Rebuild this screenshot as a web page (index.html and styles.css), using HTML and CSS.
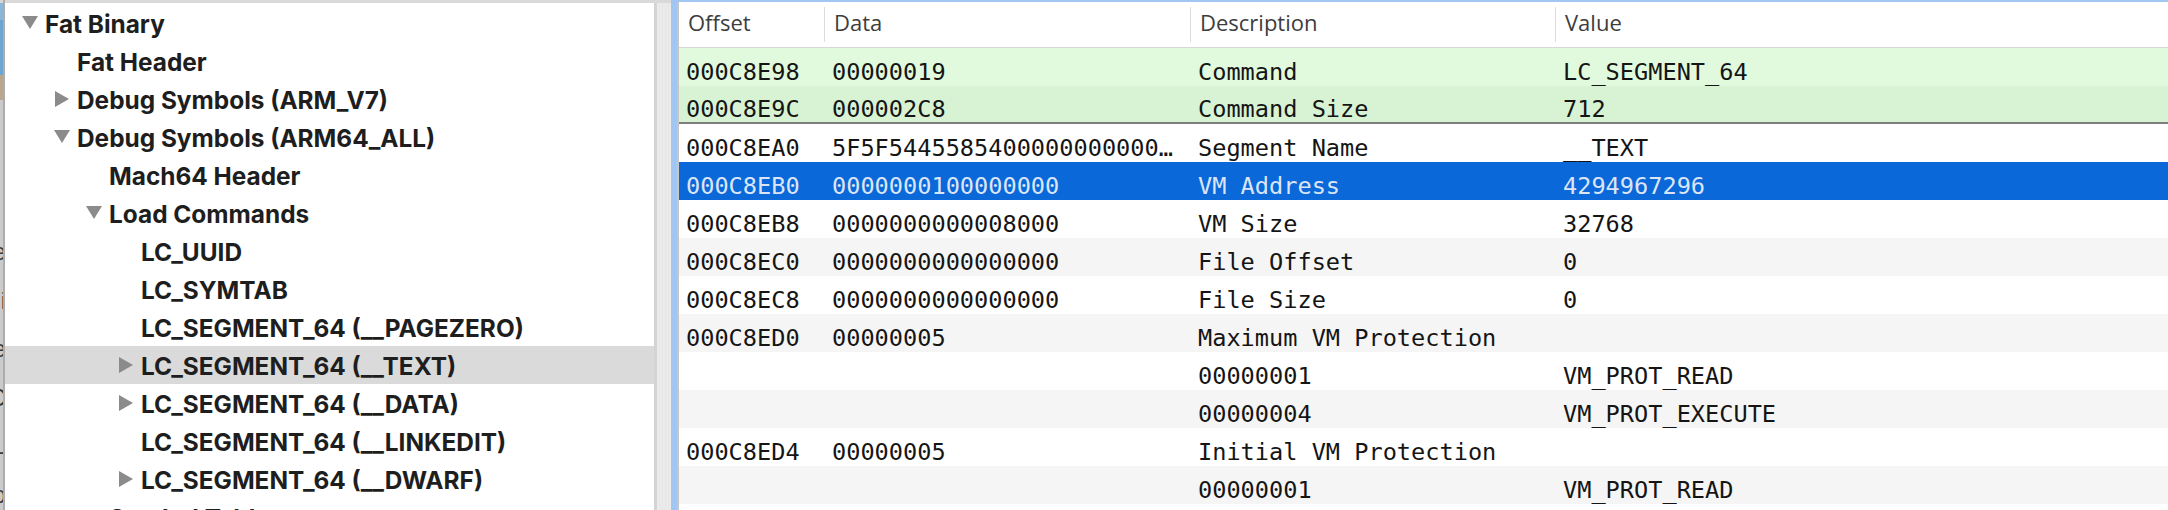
FILE: index.html
```html
<!DOCTYPE html>
<html>
<head>
<meta charset="utf-8">
<link rel="stylesheet" href="styles.css">
</head>
<body>
<div class="window">
  <div class="behind">
    <div class="frag">Fle</div>
    <div class="frag">Fi</div>
    <div class="frag">Fe</div>
    <div class="frag">FC</div>
    <div class="frag">FL</div>
    <div class="frag">Fo</div>
  </div>
  <div class="tree">
    <div class="trow l0"><span class="slot"><span class="tri down"></span></span><span class="label">Fat Binary</span></div>
    <div class="trow l1"><span class="slot"></span><span class="label">Fat Header</span></div>
    <div class="trow l1"><span class="slot"><span class="tri right"></span></span><span class="label">Debug Symbols (ARM_V7)</span></div>
    <div class="trow l1"><span class="slot"><span class="tri down"></span></span><span class="label">Debug Symbols (ARM64_ALL)</span></div>
    <div class="trow l2"><span class="slot"></span><span class="label">Mach64 Header</span></div>
    <div class="trow l2"><span class="slot"><span class="tri down"></span></span><span class="label">Load Commands</span></div>
    <div class="trow l3"><span class="slot"></span><span class="label">LC_UUID</span></div>
    <div class="trow l3"><span class="slot"></span><span class="label">LC_SYMTAB</span></div>
    <div class="trow l3"><span class="slot"></span><span class="label">LC_SEGMENT_64 (__PAGEZERO)</span></div>
    <div class="trow l3 selected"><span class="slot"><span class="tri right"></span></span><span class="label">LC_SEGMENT_64 (__TEXT)</span></div>
    <div class="trow l3"><span class="slot"><span class="tri right"></span></span><span class="label">LC_SEGMENT_64 (__DATA)</span></div>
    <div class="trow l3"><span class="slot"></span><span class="label">LC_SEGMENT_64 (__LINKEDIT)</span></div>
    <div class="trow l3"><span class="slot"><span class="tri right"></span></span><span class="label">LC_SEGMENT_64 (__DWARF)</span></div>
    <div class="trow l2"><span class="slot"><span class="tri down"></span></span><span class="label">Symbol Table</span></div>
  </div>
  <div class="splitter"></div>
  <div class="tablewrap">
    <div class="table">
      <div class="thead">
        <div class="th">Offset</div>
        <div class="th sep">Data</div>
        <div class="th sep">Description</div>
        <div class="th sep">Value</div>
      </div>
      <div class="tr g1"><div class="td">000C8E98</div><div class="td">00000019</div><div class="td">Command</div><div class="td">LC_SEGMENT_64</div></div>
      <div class="tr g2"><div class="td">000C8E9C</div><div class="td">000002C8</div><div class="td">Command Size</div><div class="td">712</div></div>
      <div class="tr"><div class="td">000C8EA0</div><div class="td">5F5F5445585400000000000…</div><div class="td">Segment Name</div><div class="td">__TEXT</div></div>
      <div class="tr sel"><div class="td">000C8EB0</div><div class="td">0000000100000000</div><div class="td">VM Address</div><div class="td">4294967296</div></div>
      <div class="tr"><div class="td">000C8EB8</div><div class="td">0000000000008000</div><div class="td">VM Size</div><div class="td">32768</div></div>
      <div class="tr alt"><div class="td">000C8EC0</div><div class="td">0000000000000000</div><div class="td">File Offset</div><div class="td">0</div></div>
      <div class="tr"><div class="td">000C8EC8</div><div class="td">0000000000000000</div><div class="td">File Size</div><div class="td">0</div></div>
      <div class="tr alt"><div class="td">000C8ED0</div><div class="td">00000005</div><div class="td wide">Maximum VM Protection</div><div class="td"></div></div>
      <div class="tr"><div class="td"></div><div class="td"></div><div class="td">00000001</div><div class="td">VM_PROT_READ</div></div>
      <div class="tr alt"><div class="td"></div><div class="td"></div><div class="td">00000004</div><div class="td">VM_PROT_EXECUTE</div></div>
      <div class="tr"><div class="td">000C8ED4</div><div class="td">00000005</div><div class="td wide">Initial VM Protection</div><div class="td"></div></div>
      <div class="tr alt"><div class="td"></div><div class="td"></div><div class="td">00000001</div><div class="td">VM_PROT_READ</div></div>
      <div class="tr"><div class="td"></div><div class="td"></div><div class="td"></div><div class="td"></div></div>
    </div>
  </div>
</div>
</body>
</html>
```

FILE: styles.css
```css
html, body {
  margin: 0;
  padding: 0;
}
body {
  width: 2168px;
  height: 510px;
  overflow: hidden;
  background: #d9d9d9;
}
.window {
  display: flex;
  height: 510px;
}

/* strip of the window behind */
.behind {
  width: 5px;
  flex: none;
  border-right: 2px solid #acacac;
  background: linear-gradient(to bottom, #d6d6d6 0 3px, #8ab6d8 3px 20px, #6ba6d2 20px 75px, #b8a68e 75px 100px, #cbcbcb 100px);
  overflow: hidden;
  direction: rtl;
  padding-top: 238px;
  box-sizing: border-box;
}
.frag {
  height: 48.5px;
  font: 24px "Liberation Sans", sans-serif;
  color: #3a3a3a;
  white-space: nowrap;
  margin-right: -3px;
}

/* outline */
.tree {
  width: 649px;
  flex: none;
  margin-top: 3px;
  padding-top: 1px;
  background: #fff;
  border-right: 3px solid #d4d4d4;
  overflow: hidden;
  box-sizing: content-box;
}
.trow {
  height: 38px;
  display: flex;
  align-items: center;
  font-family: "Inter", "Liberation Sans", sans-serif;
  font-weight: 700;
  font-size: 24.4px;
  color: #1e1e1e;
  white-space: nowrap;
  padding-top: 1px;
  box-sizing: border-box;
}
.trow.selected {
  background: #dadada;
}
.l0 { padding-left: 16px; }
.l1 { padding-left: 48px; }
.l2 { padding-left: 80px; }
.l3 { padding-left: 112px; }
.slot {
  width: 17px;
  height: 18px;
  margin-right: 7px;
  display: flex;
  align-items: center;
  justify-content: center;
  flex: none;
}
.tri {
  width: 0;
  height: 0;
}
.tri.down {
  border-left: 8.5px solid transparent;
  border-right: 8.5px solid transparent;
  border-top: 13px solid #8b8b8b;
  margin-top: -3px;
}
.tri.right {
  border-top: 8.5px solid transparent;
  border-bottom: 8.5px solid transparent;
  border-left: 14px solid #8b8b8b;
  margin-top: -1px;
}

/* splitter */
.splitter {
  width: 14px;
  flex: none;
  margin-top: 3px;
  background: repeating-linear-gradient(to right, #ebebeb 0 2px, #e6e6e6 2px 3px);
}

/* table */
.tablewrap {
  flex: 1;
  border-left: 6px solid #a1c6f2;
  border-top: 2px solid #a1c6f2;
  background: #fff;
  overflow: hidden;
}
.table {
  border-left: 2px solid #c6c6c6;
  height: 100%;
}
.thead, .tr {
  display: grid;
  grid-template-columns: 145px 366px 365px 1fr;
}
.thead {
  height: 46px;
  border-bottom: 1px solid #d6d6d6;
  box-sizing: border-box;
  align-items: center;
}
.th {
  height: 35px;
  line-height: 35px;
  padding-left: 9px;
  font: 22px "Open Sans", sans-serif;
  color: #3d3d3d;
}
.th.sep {
  border-left: 1px solid #dcdcdc;
}
.tr {
  height: 38px;
  box-sizing: border-box;
}
.td {
  padding: 10px 7px 0 8px;
  font: 23.6px/28px "DejaVu Sans Mono", monospace;
  color: #151515;
  white-space: nowrap;
  overflow: hidden;
  text-overflow: ellipsis;
}
.td:first-child {
  padding-left: 7px;
}
.td.wide {
  overflow: visible;
}
.tr.g1 { background: #e1fadd; }
.tr.g2 { background: #d8f3d4; border-bottom: 2px solid #7e7e7e; }
.tr.g2 .td { line-height: 26px; }
.tr.alt { background: #f5f5f5; }
.tr.sel { background: #0a68d8; }
.tr.sel .td { color: #dce5f8; }
```
